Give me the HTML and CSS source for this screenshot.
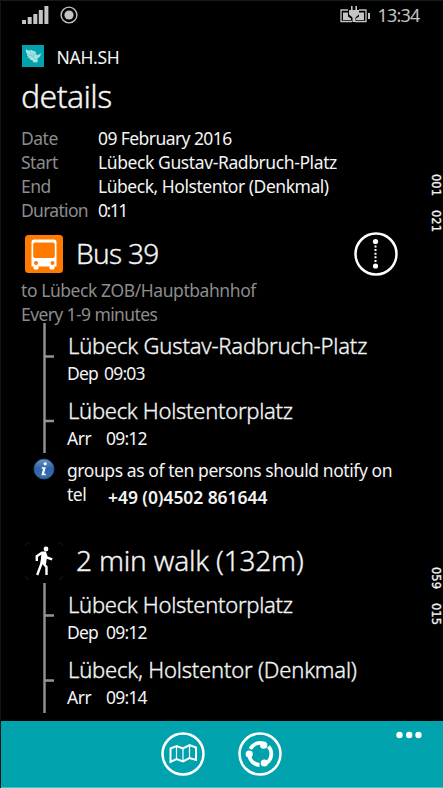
FILE: index.html
```html
<!DOCTYPE html>
<html lang="en">
<head>
<meta charset="utf-8">
<title>NAH.SH details</title>
<link rel="stylesheet" href="styles.css">
</head>
<body>
<div class="phone">
  <header class="status">
    <svg class="signal" width="27" height="18" viewBox="0 0 27 18" fill="#c4c4c4"><path d="M0 14h4v4H0zM5.700 11h4v7h-4zM11.300 8h4v10h-4zM16.800 4h4v14h-4zM22.400 0h4v18h-4z"/></svg>
    <svg class="location" width="18" height="18" viewBox="0 0 18 18"><circle cx="9" cy="9" r="7.900" fill="none" stroke="#c4c4c4" stroke-width="1.400"/><circle cx="9" cy="9" r="4.600" fill="#c4c4c4"/></svg>
    <svg class="battery" width="31" height="17" viewBox="0 0 31 17"><path d="M8 4H1v11.500h11M19 4h7v11.500H15" fill="none" stroke="#c4c4c4" stroke-width="1.300"/><path d="M28 7h2v6h-2zM3 6.500h5v4l3 2v1.500H3zM24 6.500h-5v4l-3 2v1.500h8zM11 0h1.600v4h2.800V0H17v4h2v4.500L15.500 11.500V16h-3v-4.500L9 8.500V4h2z" fill="#c4c4c4"/></svg>
    <span class="clock">13:34</span>
  </header>
  <div class="brand">
    <svg class="logo" width="22" height="22" viewBox="0 0 22 22"><path fill="#00a3ad" d="M0 0h22v22H0z"/><path fill="#a9e2e5" d="M4 4l1.500 1.200L7 5.500l2-.5 2.500 1 2 .5.5 2 .5 1.500L17 9.500l2-1.500-.5 2.500-1 1.500-1.500 1-1 1.500 1.500 1.500-1.500.5-.5 1.500-1.500-1-1.500.5-1-2-2.500-1-.5-1.500-2-.5 1-1.500L5 11l.5-2L4 7.500z"/><path d="M8 6l1 4 5 5M6 10l4 1 4-2M11 8l1 5" fill="none" stroke="#62c8cd" stroke-width=".6"/></svg>
    <span class="brand-name">NAH.SH</span>
  </div>
  <h1 class="title"><span>details</span></h1>
  <dl class="facts">
    <dt class="f-date">Date</dt><dd class="v-date">09 February 2016</dd>
    <dt class="f-start">Start</dt><dd class="v-start">Lübeck Gustav-Radbruch-Platz</dd>
    <dt class="f-end">End</dt><dd class="v-end">Lübeck, Holstentor (Denkmal)</dd>
    <dt class="f-dur">Duration</dt><dd class="v-dur">0:11</dd>
  </dl>
  <section class="leg bus">
    <div class="leg-head">
      <svg class="mode" width="38" height="38" viewBox="0 0 38 38"><rect width="38" height="38" rx="3.500" fill="#ff7a00"/><path fill="#fff" fill-rule="evenodd" d="M9 4.500h20q2.500 0 2.500 2.500v24.500h-2v1.500q0 1.500-1.500 1.500h-2q-1.500 0-1.500-1.500v-1.500h-11V33q0 1.500-1.500 1.500h-2Q8.500 34.500 8.500 33v-1.500h-2V7Q6.500 4.500 9 4.500zM10 7.500q-1.800 0-1.800 1.800v12q0 1.700 1.800 1.700h18q1.800 0 1.800-1.700v-12q0-1.800-1.800-1.800z"/><circle cx="11" cy="28" r="2" fill="#ff7a00"/><circle cx="27.500" cy="28" r="2" fill="#ff7a00"/></svg>
      <h2 class="bus-name">Bus 39</h2>
      <svg class="stops" width="44" height="44" viewBox="0 0 44 44"><circle cx="22" cy="22" r="20.500" fill="none" stroke="#fff" stroke-width="2.500"/><circle cx="21.500" cy="9.500" r="2.600" fill="#fff"/><circle cx="21.500" cy="34" r="2.600" fill="#fff"/><path d="M21.500 13.500v18" stroke="#fff" stroke-width="2" stroke-dasharray="2 1.600"/></svg>
    </div>
    <p class="note n-dest">to Lübeck ZOB/Hauptbahnhof</p>
    <p class="note n-freq">Every 1-9 minutes</p>
    <div class="route">
      <svg class="rail" width="12" height="130" viewBox="0 0 12 130"><path d="M1.500 0v130M1.500 33.500H11M1.500 98H11" fill="none" stroke="#949494" stroke-width="2.400"/></svg>
      <div class="stations">
        <h3 class="s-gustav">Lübeck Gustav-Radbruch-Platz</h3>
        <p><span class="kind">Dep</span><time class="near">09:03</time></p>
        <h3 class="s-holst">Lübeck Holstentorplatz</h3>
        <p><span class="kind arr">Arr</span><time>09:12</time></p>
      </div>
    </div>
    <div class="notice">
      <svg class="info" width="22" height="22" viewBox="0 0 22 22"><defs><linearGradient id="b" x2="0" y2="1"><stop stop-color="#6c93c5"/><stop offset=".5" stop-color="#2e64a9"/><stop offset="1" stop-color="#386fb3"/></linearGradient></defs><circle cx="11" cy="11" r="10" fill="url(#b)" stroke="#2b5488"/><circle cx="12.200" cy="5.800" r="1.600" fill="#fff"/><path d="M8.800 9.200h4l-1.700 6.500h1.700v1.500H8.400l1.700-6.500H8.600z" fill="#fff"/></svg>
      <div class="notice-text">
        <p class="n-groups">groups as of ten persons should notify on</p>
        <p class="n-tel"><span>tel</span><strong>+49 (0)4502 861644</strong></p>
      </div>
    </div>
  </section>
  <section class="leg walk">
    <div class="leg-head">
      <svg class="mode" width="38" height="38" viewBox="0 0 38 38"><path d="M.5 4Q.5.500 4 .5M34 .5q3.500 0 3.500 3.500M.5 34q0 3.500 3.500 3.500M34 37.500q3.500 0 3.500-3.500" fill="none" stroke="#1c1c1c"/><circle cx="21" cy="7" r="2.400" fill="#fff"/><path d="M11.800 19v-4.800L17 10.800h3l1.700 4.700 5.500 1.800M18.500 11l-2 10.500-4.300 11.500M18 21l3.500 4v8" fill="none" stroke="#fff" stroke-width="2.400"/><path d="M16.500 10h4l1.500 5-1 7h-5.500z" fill="#fff"/></svg>
      <h2 class="walk-name">2 min walk (132m)</h2>
    </div>
    <div class="route">
      <svg class="rail" width="12" height="130" viewBox="0 0 12 130"><path d="M1.500 0v130M1.500 32.500H11M1.500 97.500H11" fill="none" stroke="#949494" stroke-width="2.400"/></svg>
      <div class="stations">
        <h3 class="s-holst">Lübeck Holstentorplatz</h3>
        <p><span class="kind">Dep</span><time>09:12</time></p>
        <h3 class="s-denk">Lübeck, Holstentor (Denkmal)</h3>
        <p><span class="kind arr">Arr</span><time>09:14</time></p>
      </div>
    </div>
  </section>
  <footer class="appbar">
    <svg class="map" width="44" height="44" viewBox="0 0 44 44" fill="none" stroke="#fff"><circle cx="22" cy="22" r="20.500" stroke-width="2.500"/><path d="M9.500 16.500l6-2.500 6.500 2.500 6.500-3.500 6.500 2.500v12.500l-6.500-2-6.500 3.500-6.500-2.500-6 3z" stroke-width="2"/><path d="M15.500 14v13M22 16.500V29M28.500 13v13" stroke-width="1.200"/></svg>
    <svg class="share" width="44" height="44" viewBox="0 0 44 44" fill="none" stroke="#fff"><circle cx="22" cy="22" r="20.500" stroke-width="2.500"/><path d="M12.300 17A11 11 0 0 1 25 11.300M30.500 14.500A11 11 0 0 1 28.500 30.900M21.500 33A11 11 0 0 1 11.200 24" stroke-width="3.800"/><g fill="#fff" stroke="none"><circle cx="25.700" cy="13.200" r="3.600"/><circle cx="11.200" cy="22" r="3.600"/><circle cx="26.300" cy="31" r="3.600"/></g></svg>
    <svg class="more" width="26" height="8" viewBox="0 0 26 8" fill="#fff"><circle cx="3.500" cy="4" r="3.200"/><circle cx="13.200" cy="4" r="3.200"/><circle cx="22.500" cy="4" r="3.200"/></svg>
  </footer>
  <div class="counter upper"><span>001</span><span>021</span></div>
  <div class="counter lower"><span>059</span><span>015</span></div>
</div>
</body>
</html>
```
FILE: styles.css
```css
* { box-sizing: border-box; margin: 0; padding: 0; }
body { background: #000; }
.phone {
  position: relative; display: flex; flex-direction: column;
  width: 443px; height: 788px; overflow: hidden;
  background: #000; color: #f4f4f4;
  border-top: 1px solid #181a1a; border-left: 1px solid #131515;
  font: 17.5px/24px "Noto Sans", "Open Sans", sans-serif; white-space: nowrap;
}
svg { display: block; flex: none; }
h1, h2, h3 { font-weight: 300; -webkit-text-stroke: .35px #f4f4f4; }
.status { display: flex; height: 44px; padding: 5px 0 0 21px; }
.location { margin-left: 10.500px; }
.battery { margin-left: 262px; }
.clock { margin-left: 7px; margin-top: -3px; color: #c4c4c4; font-size: 18px; letter-spacing: -.8px; }
.brand { display: flex; align-items: center; height: 22px; padding-left: 21px; }
.brand-name { margin-left: 12.500px; padding-top: 2px; letter-spacing: -.3px; }
.title { height: 58px; padding: 7px 0 0 20px; font-size: 32px; line-height: 44px; letter-spacing: -.6px; }
.facts { display: grid; grid-template-columns: 77px 1fr; grid-auto-rows: 24px; align-content: start; padding: 1px 0 0 20px; height: 98px; }
.facts dt, .note { color: #8c8c8c; }
.facts dt { letter-spacing: -.5px; }
.facts .f-dur { letter-spacing: -.7px; }
.facts .v-date { letter-spacing: -.58px; }
.facts .v-start { letter-spacing: -.4px; }
.facts .v-end { letter-spacing: -.47px; }
.facts .v-dur { letter-spacing: -1.500px; }
.leg { display: flex; flex-direction: column; }
.leg-head { display: flex; align-items: flex-start; padding-left: 24px; }
.leg-head h2 { width: 278px; margin-left: 13px; font-size: 28px; line-height: 38px; }
.leg-head .bus-name { letter-spacing: -.7px; }
.leg-head .walk-name { letter-spacing: -.18px; }
.bus .leg-head { height: 55px; padding-top: 12px; }
.bus .leg-head h2 { margin-top: -1px; }
.stops { margin-top: -3px; }
.note { padding-left: 20px; }
.n-dest { letter-spacing: -.43px; }
.n-freq { letter-spacing: -.6px; }
.route { display: flex; height: 130px; padding-left: 42px; }
.bus .route { margin-top: -3px; }
.stations { padding: 7px 0 0 13px; }
.stations h3 { font-size: 22px; line-height: 30px; height: 31px; }
.stations .s-gustav { letter-spacing: -.18px; }
.stations .s-holst { letter-spacing: -.28px; }
.stations .s-denk { letter-spacing: -.2px; }
.stations p { height: 33.500px; margin-left: -1px; display: flex; letter-spacing: -.8px; }
.kind { width: 39px; }
.arr { letter-spacing: -.4px; }
.near { margin-left: -2px; }
.notice { display: flex; padding-left: 32px; height: 60px; padding-top: 5px; }
.notice-text { margin-left: 12px; }
.n-groups { letter-spacing: -.42px; }
.n-tel { display: flex; }
.n-tel span { width: 41px; letter-spacing: -.5px; }
.n-tel strong { font-weight: 600; padding-top: 3px; letter-spacing: -.07px; }
.walk .leg-head { margin-top: 29px; height: 41px; }
.walk .leg-head h2 { margin-top: -1px; }
.walk .stations { padding-top: 6px; }
.appbar { display: flex; margin: auto 0 0 -1px; height: 67px; padding: 11px 0 0 161px; background: #00a3ad; border-bottom: 1px solid #36c9d1; }
.share { margin-left: 33px; }
.more { margin-left: 114px; margin-top: -1px; }
.counter { position: absolute; right: 1px; display: flex; gap: 14px; writing-mode: vertical-rl; font: 11.500px/12px "DejaVu Sans", sans-serif; -webkit-text-stroke: .3px #f4f4f4; }
.upper { top: 173px; }
.lower { top: 566px; }
```
